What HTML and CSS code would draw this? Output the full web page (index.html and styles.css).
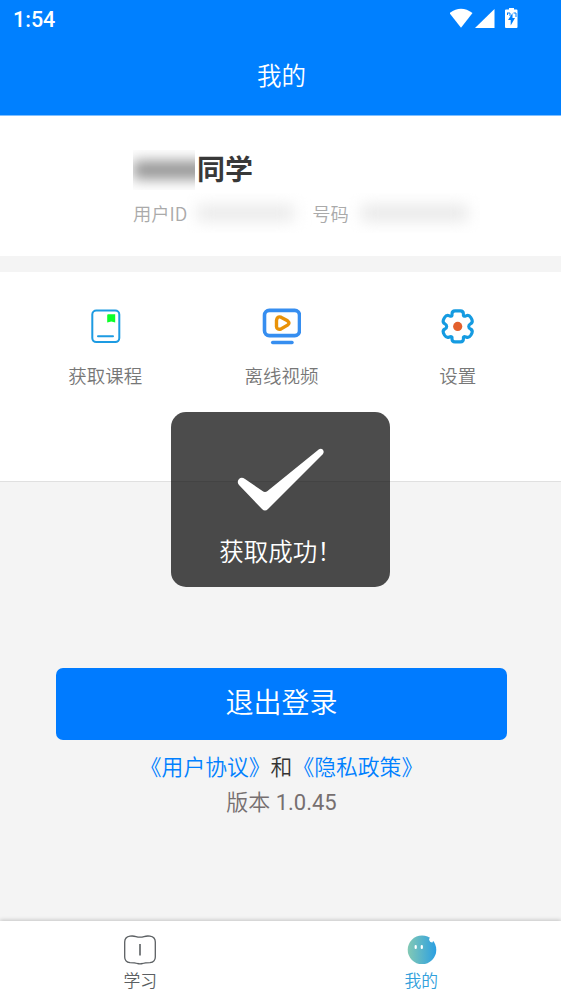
FILE: index.html
```html
<!DOCTYPE html>
<html lang="zh-CN">
<head>
<meta charset="utf-8">
<title>我的</title>
<link rel="stylesheet" href="styles.css">
</head>
<body>
<div class="app">
  <header class="header">
    <div class="status">
      <span class="time">1:54</span>
      <svg class="status-icons" width="74" height="24" viewBox="0 0 74 24">
        <path fill="#fff" d="M-.5 8Q11-.5 22.500 8L11 22.800Z"/>
        <path fill="#fff" d="M44.500 4V23H25Z"/>
        <path fill="#fff" d="M56 4.500H59V3h5v1.500h2.500q1 0 1 1V22q0 1-1 1h-10.500q-1 0-1-1V5.500q0-1 1-1z"/>
        <path fill="#0080ff" d="M62.500 8l-4.500 7h2.700v5.500l4.300-7.500h-2.500z"/>
        <path stroke="#0080ff" fill="none" d="M57 8h3v3M57.500 8v2M63.500 8h2.500v4"/>
      </svg>
    </div>
    <h1 class="title">我的</h1>
  </header>
  <section class="profile">
    <div class="name-row"><span class="mask mask-name"><i></i></span><span class="name">同学</span></div>
    <div class="meta-row">
      <span>用户ID</span><span class="mask mask-id"><i></i></span>
      <span>号码</span><span class="mask mask-number"><i></i></span>
    </div>
  </section>
  <nav class="actions">
    <a class="action">
      <svg width="40" height="40" viewBox="0 0 40 40" fill="none">
        <rect x="7.300" y="4.600" width="27" height="31.500" rx="4" stroke="#1d9be2" stroke-width="2"/>
        <path d="M13 30.300h15" stroke="#1d9be2" stroke-width="2" stroke-linecap="round"/>
        <path d="M22.200 9.200q0-1 1-1h7v8.200l-3.900-1-4.100 1z" fill="#0cff29"/>
      </svg>
      <span>获取课程</span>
    </a>
    <a class="action">
      <svg width="40" height="40" viewBox="0 0 40 40" fill="none" stroke-linecap="round">
        <rect x="3.500" y="4.400" width="35" height="25.200" rx="4.800" stroke="#368ef0" stroke-width="3.600"/>
        <path d="M11.600 36.500h19.500" stroke="#368ef0" stroke-width="3.300"/>
        <path d="M15.500 14.500Q16 9.800 20 11.200L26.500 14.800Q29.500 17 26.500 19.200L20 23Q15.800 24 15.500 20.500Z" stroke="#e99207" stroke-width="3.400"/>
      </svg>
      <span>离线视频</span>
    </a>
    <a class="action">
      <svg width="40" height="40" viewBox="0 0 40 40" fill="none">
        <path d="M14 9.500V8Q14 4.900 17 4.900H22.400Q25.400 4.900 25.400 8V9.500Q26 10.700 28 9.800Q31 8.500 32.800 11.500L34 13.700Q35 16.500 32.500 17.800Q30.700 18.800 30.700 20.400Q30.700 22 32.500 23Q35 24.300 34 27.100L32.800 29.300Q31 32.300 28 31Q26 30.100 25.400 31.300V33Q25.400 35.900 22.400 35.900H17Q14 35.900 14 33V31.300Q13.400 30.100 11.400 31Q8.400 32.300 6.600 29.300L5.400 27.100Q4.400 24.300 6.900 23Q8.700 22 8.700 20.400Q8.700 18.800 6.900 17.800Q4.400 16.500 5.400 13.700L6.600 11.500Q8.400 8.500 11.400 9.800Q13.400 10.700 14 9.500Z" stroke="#159be1" stroke-width="3.100" stroke-linejoin="round"/>
        <circle cx="19.700" cy="20.400" r="4.600" fill="#e3602c"/>
      </svg>
      <span>设置</span>
    </a>
  </nav>
  <main class="account">
    <button class="logout">退出登录</button>
    <p class="legal"><a>《用户协议》</a>和<a>《隐私政策》</a></p>
    <p class="version">版本 <span class="number">1.0.45</span></p>
  </main>
  <footer class="tabs">
    <a class="tab">
      <svg width="34" height="32" viewBox="0 0 34 32" fill="none" stroke="#5b5f62" stroke-width="1.300">
        <path d="M7 2.200Q10 1.700 13 2.600Q17 3.800 21 2.600Q24 1.700 27 2.200Q32.300 3 32.300 8V23Q32.300 28 27 28.700Q22 28.700 19.500 29.500Q17 30.200 14.500 29.500Q12 28.700 7 28.700Q1.700 28 1.700 23V8Q1.700 3 7 2.200Z"/>
        <path d="M17 10v11.500" stroke-width="1.600"/>
      </svg>
      <span>学习</span>
    </a>
    <a class="tab tab-active">
      <svg width="34" height="32" viewBox="0 0 34 32">
        <defs><linearGradient id="face"><stop stop-color="#83c9b4"/><stop offset="1" stop-color="#2b9fe2"/></linearGradient></defs>
        <circle cx="18" cy="15.800" r="14.300" fill="url(#face)"/>
        <path d="M25 5q.5 3.500 3.500 3.500Q29 5 32 6L29 0z" fill="#fff"/>
        <path d="M11.700 12v2M17.800 12v2" stroke="#fff" stroke-width="2.200" stroke-linecap="round"/>
      </svg>
      <span>我的</span>
    </a>
  </footer>
  <div class="toast" role="status">
    <svg width="88" height="64" viewBox="0 0 88 64"><path fill="#fff" d="M2 37Q-.5 34 2 31Q4.500 28.500 8 31L25.500 43Q28 45 30.500 43L82 1.300Q84 .3 85.700 1.500Q87.500 3.500 86 6L31 61Q28 64 25 61Z"/></svg>
    <span>获取成功！</span>
  </div>
</div>
</body>
</html>
```
FILE: styles.css
```css
* { box-sizing: border-box; }
body {
  margin: 0;
  background: #f4f4f4;
  font-family: Roboto, "Noto Sans CJK SC", sans-serif;
  font-weight: 350;
}
.app {
  position: relative;
  display: flex;
  flex-direction: column;
  height: 999px;
  overflow: hidden;
}
.header {
  height: 116px;
  background: #0080ff;
  border-bottom: 1px solid #7fbfff;
  color: #fff;
}
.status {
  display: flex;
  justify-content: space-between;
  height: 40px;
  padding: 5px 37px 0 13px;
}
.time {
  font-size: 21.5px;
  font-weight: 500;
  line-height: 30px;
}
.title {
  margin: 19px 0 0;
  padding-left: 2px;
  font-size: 24.5px;
  font-weight: 350;
  line-height: 36px;
  text-align: center;
}
.profile {
  height: 140px;
  padding: 34px 0 0 133px;
  background: #fff;
}
.name-row, .meta-row { display: flex; align-items: center; }
.name-row { height: 40px; }
.name {
  color: #383838;
  font-size: 28px;
  font-weight: 700;
  line-height: 40px;
  padding-top: 1px;
  margin-left: 2px;
}
.meta-row {
  height: 30px;
  margin-top: 8px;
  color: #aaa;
  font-family: "Noto Sans CJK SC", sans-serif;
  font-size: 18.3px;
  line-height: 30px;
  white-space: nowrap;
}
.mask { display: block; overflow: hidden; }
.mask i { display: block; }
.mask-name { width: 62px; height: 40px; padding: 11px 0 0 0; }
.mask-name i { width: 76px; height: 18px; background: #929292; filter: blur(7px); }
.mask-id { width: 125px; height: 40px; padding: 13px 18px 0 10px; }
.mask-id i { height: 14px; background: #e6e6e6; filter: blur(8px); }
.mask-number { width: 131px; height: 40px; padding: 13px 12px 0 12px; }
.mask-number i { height: 14px; background: #e4e4e4; filter: blur(8px); }
.actions {
  display: grid;
  grid-template-columns: repeat(3, 1fr);
  height: 210px;
  margin-top: 16px;
  padding: 34px 15px 0 17px;
  border-bottom: 1px solid #e0e0e0;
  background: #fff;
}
.action {
  display: flex;
  flex-direction: column;
  align-items: center;
  gap: 16px;
  color: #777;
  font-size: 18.5px;
  line-height: 30px;
}
.account {
  display: flex;
  flex: 1;
  flex-direction: column;
  align-items: center;
  padding: 186px 0 0 2px;
}
.logout {
  width: 451px;
  height: 72px;
  padding: 0 0 6px;
  border: 0;
  border-radius: 7px;
  background: #007bff;
  color: #fff;
  font: 350 28px/40px "Noto Sans CJK SC", sans-serif;
}
.legal, .version {
  margin: 0;
  color: #333;
  font-size: 22px;
  line-height: 36px;
}
.legal { margin-top: 8px; font-size: 21.8px; font-family: "Noto Sans CJK SC", sans-serif; }
.legal a { color: #0080ff; }
.version { margin-top: 1px; color: #766f70; }
.number { font-weight: 400; }
.tabs {
  display: grid;
  grid-template-columns: 1fr 1fr;
  height: 78px;
  padding-top: 13px;
  background: #fff;
  box-shadow: 0 -1px 4px #0003;
}
.tab {
  display: flex;
  flex-direction: column;
  align-items: center;
  color: #5b5f62;
  font-size: 16.8px;
  line-height: 30px;
}
.tab svg { flex: none; }
.tab-active { padding-left: 1px; color: #32a0dc; }
.toast {
  position: absolute;
  top: 412px;
  left: 171px;
  display: flex;
  flex-direction: column;
  align-items: center;
  width: 219px;
  height: 175px;
  padding: 36px 0 0;
  border-radius: 15px;
  background: rgba(0, 0, 0, .7);
  color: #fff;
  font-size: 24.5px;
  line-height: 36px;
}
.toast span { margin-top: 23px; }
```
